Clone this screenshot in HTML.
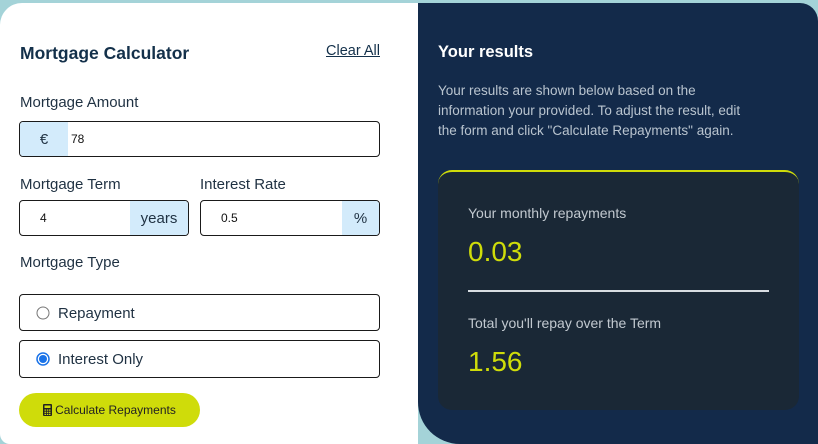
<!DOCTYPE html>
<html style="width:818px;height:444px;overflow:hidden"><head><meta charset="utf-8"><style>
*{box-sizing:border-box;margin:0;padding:0}
body{width:818px;height:444px;overflow:hidden;background:#a4d3d8;font-family:"Liberation Sans",sans-serif;position:relative}
.left{position:absolute;left:0;top:3px;width:418px;height:441px;background:#fff;border-radius:22px 0 0 10px}
.right{position:absolute;left:418px;top:3px;width:400px;height:441px;background:#132a4a;border-radius:0 18px 0 42px}
.t{position:absolute;color:#13304a;white-space:nowrap}
h1{position:absolute;left:20px;top:43px;font-size:17.5px;font-weight:bold;color:#13304a}
.clear{position:absolute;left:326px;top:43px;font-size:14.5px;color:#13304a;text-decoration:underline}
.lbl{position:absolute;font-size:15px;color:#1f3142}
.box{position:absolute;border:1.3px solid #1a1a1a;border-radius:4px;overflow:hidden;background:#fff}
.pre{position:absolute;top:0;bottom:0;background:#d3ebfb;color:#1f3142;font-size:15px;display:flex;align-items:center;justify-content:center}
.v{position:absolute;font-size:12px;color:#111}
.radio{position:absolute;font-size:15px;color:#1f3142}
.btn{position:absolute;left:19px;top:393px;width:181px;height:34px;border-radius:17px;background:#cfdc0a;font-size:12px;color:#222;display:flex;align-items:center;justify-content:center;gap:3px}
.card{position:absolute;left:438px;top:170px;width:361px;height:240px;background:#1a2836;border-radius:14px;border-top:2px solid #cfdc0a}
</style></head><body>
<div class="left"></div>
<div class="right"></div>
<h1>Mortgage Calculator</h1>
<div class="clear">Clear All</div>
<div class="lbl" style="left:20px;top:94px">Mortgage Amount</div>
<div class="box" style="left:19px;top:121px;width:361px;height:36px"><div class="pre" style="left:0;width:48px">€</div><div class="v" style="left:51px;top:10px">78</div></div>
<div class="lbl" style="left:20px;top:176px">Mortgage Term</div>
<div class="lbl" style="left:200px;top:176px">Interest Rate</div>
<div class="box" style="left:19px;top:200px;width:170px;height:36px"><div class="v" style="left:20px;top:10px">4</div><div class="pre" style="right:0;width:58px">years</div></div>
<div class="box" style="left:200px;top:200px;width:180px;height:36px"><div class="v" style="left:20px;top:10px">0.5</div><div class="pre" style="right:0;width:37px">%</div></div>
<div class="lbl" style="left:20px;top:254px">Mortgage Type</div>
<div class="box" style="left:19px;top:294px;width:361px;height:37px"></div>
<div class="box" style="left:19px;top:340px;width:361px;height:38px"></div>
<svg style="position:absolute;left:36px;top:306px" width="14" height="14"><circle cx="7" cy="7" r="6" fill="#fff" stroke="#767676" stroke-width="1"/></svg>
<div class="radio" style="left:58px;top:305px">Repayment</div>
<svg style="position:absolute;left:36px;top:352px" width="14" height="14"><circle cx="7" cy="7" r="6" fill="#fff" stroke="#1a73e8" stroke-width="1.5"/><circle cx="7" cy="7" r="4" fill="#1a73e8"/></svg>
<div class="radio" style="left:58px;top:351px">Interest Only</div>
<div class="btn"><svg width="9" height="12" viewBox="0 0 9 12"><rect x="0" y="0" width="9" height="12" rx="1" fill="#222"/><rect x="1.5" y="1.5" width="6" height="2.5" fill="#cfdc0a"/><g fill="#cfdc0a"><rect x="1.5" y="5.5" width="1.5" height="1.2"/><rect x="3.8" y="5.5" width="1.5" height="1.2"/><rect x="6" y="5.5" width="1.5" height="1.2"/><rect x="1.5" y="7.7" width="1.5" height="1.2"/><rect x="3.8" y="7.7" width="1.5" height="1.2"/><rect x="6" y="7.7" width="1.5" height="1.2"/><rect x="1.5" y="9.8" width="1.5" height="1.2"/><rect x="3.8" y="9.8" width="1.5" height="1.2"/><rect x="6" y="9.8" width="1.5" height="1.2"/></g></svg>Calculate Repayments</div>
<div class="t" style="left:438px;top:43px;font-size:16.5px;font-weight:bold;color:#fff">Your results</div>
<div class="t" style="left:438px;top:81px;font-size:13.5px;line-height:20px;color:#b9c4cf">Your results are shown below based on the<br>information your provided. To adjust the result, edit<br>the form and click "Calculate Repayments" again.</div>
<div class="card"></div>
<div class="t" style="left:468px;top:205px;font-size:14px;color:#c2c9d0">Your monthly repayments</div>
<div class="t" style="left:468px;top:236px;font-size:28px;color:#cfdc0a">0.03</div>
<div style="position:absolute;left:468px;top:290px;width:301px;height:2px;background:#d8dde2"></div>
<div class="t" style="left:468px;top:315px;font-size:14px;color:#c2c9d0">Total you'll repay over the Term</div>
<div class="t" style="left:468px;top:346px;font-size:28px;color:#cfdc0a">1.56</div>
</body></html>
